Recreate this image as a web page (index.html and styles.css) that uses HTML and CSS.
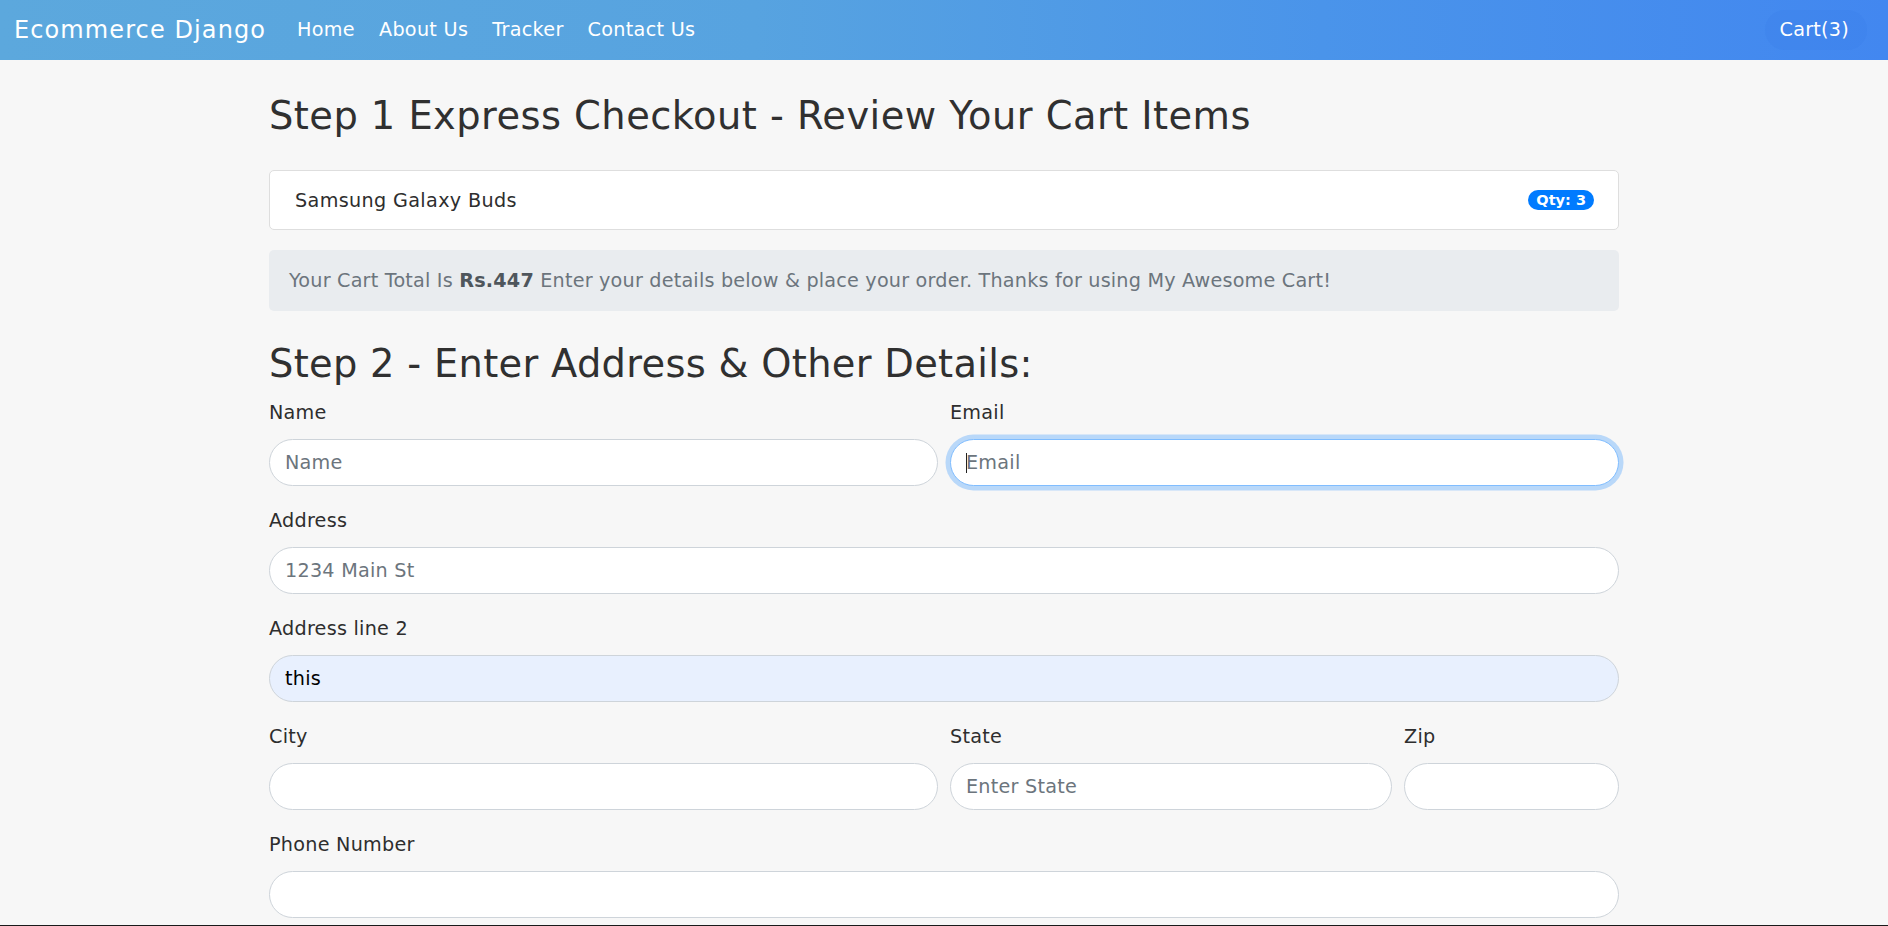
FILE: index.html
```html
<!DOCTYPE html>
<html lang="en">
<head>
<meta charset="utf-8">
<title>Checkout - Ecommerce Django</title>
<link rel="stylesheet" href="styles.css">
</head>
<body>
<nav class="navbar">
  <a class="brand" href="#">Ecommerce Django</a>
  <ul class="nav-links">
    <li><a href="#">Home</a></li>
    <li><a href="#">About Us</a></li>
    <li><a href="#">Tracker</a></li>
    <li><a href="#">Contact Us</a></li>
  </ul>
  <a class="cart-btn" href="#">Cart(3)</a>
</nav>

<main class="container">
  <h2 class="step-title step-one">Step 1 Express Checkout - Review Your Cart Items</h2>
  <ul class="cart-list">
    <li class="cart-item"><span>Samsung Galaxy Buds</span><span class="badge">Qty: 3</span></li>
  </ul>
  <div class="total-alert">Your Cart Total Is <b>Rs.447</b> Enter your details below &amp; place your order. Thanks for using My Awesome Cart!</div>

  <h2 class="step-title step-two">Step 2 - Enter Address &amp; Other Details:</h2>
  <form class="checkout-form">
    <div class="form-row">
      <div class="field span-6">
        <label for="name">Name</label>
        <input id="name" type="text" placeholder="Name">
      </div>
      <div class="field span-6">
        <label for="email">Email</label>
        <div class="input-wrap">
          <input id="email" class="is-focused" type="email" placeholder="Email">
          <span class="caret"></span>
        </div>
      </div>
    </div>
    <div class="form-row">
      <div class="field span-12">
        <label for="address1">Address</label>
        <input id="address1" type="text" placeholder="1234 Main St">
      </div>
    </div>
    <div class="form-row">
      <div class="field span-12">
        <label for="address2">Address line 2</label>
        <input id="address2" class="is-autofilled" type="text" value="this">
      </div>
    </div>
    <div class="form-row">
      <div class="field span-6">
        <label for="city">City</label>
        <input id="city" type="text">
      </div>
      <div class="field span-4">
        <label for="state">State</label>
        <input id="state" type="text" placeholder="Enter State">
      </div>
      <div class="field span-2">
        <label for="zip">Zip</label>
        <input id="zip" type="text">
      </div>
    </div>
    <div class="form-row">
      <div class="field span-12">
        <label for="phone">Phone Number</label>
        <input id="phone" type="tel">
      </div>
    </div>
  </form>
</main>
<div class="viewport-edge"></div>
</body>
</html>
```

FILE: styles.css
```css
* { box-sizing: border-box; }

body {
  margin: 0;
  background: #f7f7f7;
  font-family: "DejaVu Sans", "Open Sans", sans-serif;
  font-size: 19.2px;
  line-height: 1.5;
  letter-spacing: 0.25px;
  color: #2e2e2e;
}

/* Navbar */
.navbar {
  height: 60px;
  display: flex;
  align-items: center;
  padding: 0 21px 0 14px;
  background: linear-gradient(90deg, #5ca8dd 0%, #57a3e0 40%, #4a94ea 70%, #4287f0 100%);
}
.brand {
  font-size: 24px;
  letter-spacing: 1.1px;
  color: #fff;
  text-decoration: none;
  margin-right: 19px;
  line-height: 1.5;
}
.nav-links {
  display: flex;
  list-style: none;
  margin: 0;
  padding: 0;
}
.nav-links a {
  display: block;
  padding: 8px 12px;
  color: #fff;
  text-decoration: none;
  font-size: 19.2px;
  letter-spacing: 0.3px;
}
.cart-btn {
  margin-left: auto;
  color: #fff;
  text-decoration: none;
  font-size: 19.2px;
  padding: 6px 18px 6px 15px;
  border-radius: 21px;
  background: rgba(40, 110, 230, 0.1);
}

/* Main */
.container {
  width: 1350px;
  margin: 0 auto;
}
.step-title {
  margin: 0;
  font-weight: 400;
  color: #303030;
  font-size: 38.4px;
  letter-spacing: 0.45px;
  line-height: 46px;
}
.step-one { margin-top: 33px; margin-bottom: 31px; }
.step-two { margin-top: 30px; margin-bottom: 11px; letter-spacing: 0.3px; }

.cart-list {
  list-style: none;
  margin: 0;
  padding: 0;
}
.cart-item {
  display: flex;
  justify-content: space-between;
  align-items: center;
  background: #fff;
  border: 1px solid #dedede;
  border-radius: 5px;
  padding: 14.5px 24px 14.5px 25px;
  line-height: 29px;
  letter-spacing: 0.35px;
  color: #2e2e2e;
}
.badge {
  background: #007bff;
  color: #fff;
  font-weight: 700;
  font-size: 14.5px;
  letter-spacing: 0;
  line-height: 1;
  padding: 3px 8px;
  border-radius: 10px;
}

.total-alert {
  margin-top: 20px;
  background: #e9ecef;
  color: #6c757d;
  border-radius: 5px;
  padding: 16px 20px;
  line-height: 29px;
  letter-spacing: 0.2px;
}
.total-alert b { color: #4f565c; }

/* Form */
.form-row {
  display: grid;
  grid-template-columns: repeat(12, 1fr);
  column-gap: 12px;
}
.field { margin-bottom: 20.5px; }
.span-12 { grid-column: span 12; }
.span-6 { grid-column: span 6; }
.span-4 { grid-column: span 4; }
.span-2 { grid-column: span 2; }

.field label {
  display: block;
  line-height: 29px;
  margin-bottom: 11.5px;
  color: #2e2e2e;
}
.field input {
  display: block;
  width: 100%;
  height: 47px;
  padding: 0 15px;
  border: 1px solid #ced4da;
  border-radius: 24px;
  background: #fff;
  font-family: inherit;
  font-size: 19.2px;
  letter-spacing: 0.25px;
  color: #495057;
  outline: none;
}
.field input::placeholder { color: #6c757d; }
.field input.is-focused {
  border-color: #80bdff;
  box-shadow: 0 0 0 4.5px rgba(0, 123, 255, 0.25);
}
.field input.is-autofilled {
  background: #e8f0fe;
  color: #000;
}
.input-wrap { position: relative; }
.caret {
  position: absolute;
  left: 16px;
  top: 14px;
  width: 1px;
  height: 20px;
  background: #222;
}

.viewport-edge {
  position: fixed;
  left: 0;
  right: 0;
  bottom: 0;
  height: 1px;
  background: #1a1a1a;
}
```
